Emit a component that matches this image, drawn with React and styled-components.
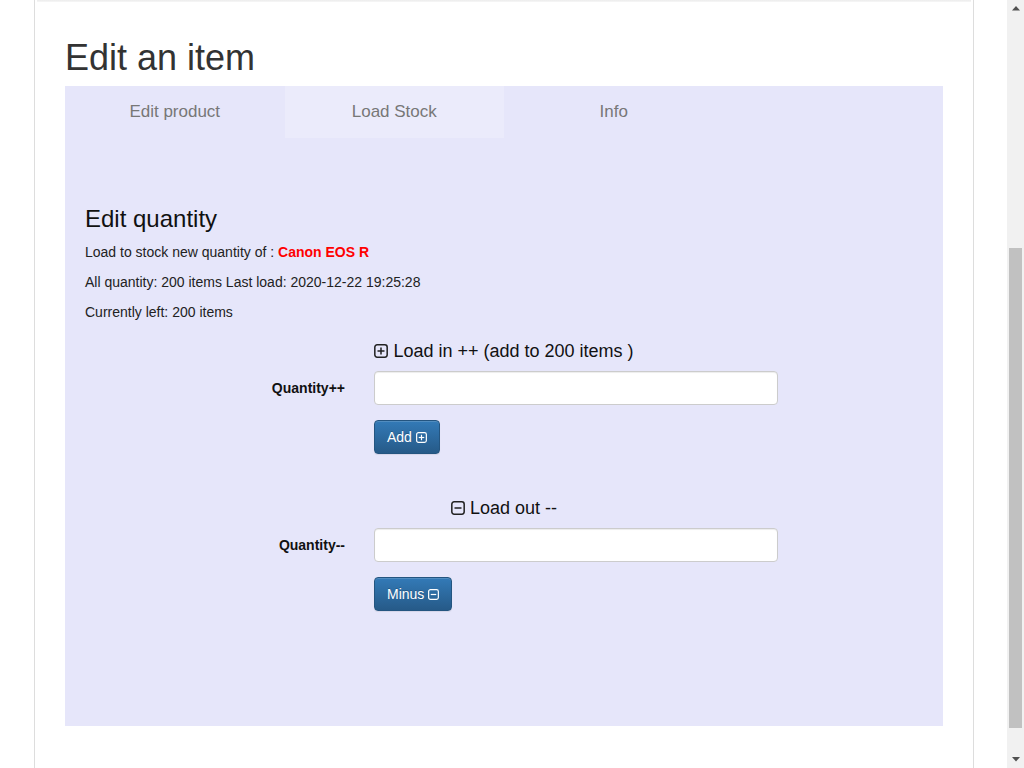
import React from "react";
import styled, { createGlobalStyle } from "styled-components";

const Global = createGlobalStyle`
  html, body {
    margin: 0;
    padding: 0;
    overflow: hidden;
    background: #fff;
    font-family: "Liberation Sans", Arial, Helvetica, sans-serif;
  }
  * { box-sizing: border-box; }
`;

const Root = styled.div`
  display: flex;
  height: 768px;
  overflow: hidden;
`;

const Main = styled.div`
  flex: 1;
  min-width: 0;
  height: 100%;
`;

const Container = styled.div`
  margin-left: 34px;
  width: 940px;
  height: 100%;
  border-left: 1px solid #ddd;
  border-right: 1px solid #ddd;
  padding: 0 30px;
`;

const TopShade = styled.div`
  height: 2px;
  margin: 0 -28px 0 -28px;
  background: linear-gradient(to bottom, #ececec, #f7f7f7);
`;

const Title = styled.h1`
  margin: 36px 0 8px;
  font-size: 36px;
  line-height: 40px;
  font-weight: 400;
  color: #333;
`;

const Panel = styled.div`
  background: #e6e6fa;
  padding-bottom: 115px;
`;

const TabBar = styled.div`
  display: grid;
  grid-template-columns: repeat(4, 1fr);
  height: 52px;
`;

const Tab = styled.div`
  height: 52px;
  line-height: 52px;
  text-align: center;
  font-size: 17px;
  color: #777;
  background: ${(p) => (p.$active ? "#ebebfb" : "transparent")};
`;

const Content = styled.div`
  display: flex;
  flex-direction: column;
  padding: 0 20px;
`;

const SectionTitle = styled.h3`
  margin: 68px 0 10px;
  font-size: 24px;
  line-height: 26px;
  font-weight: 400;
  color: #111;
`;

const Info = styled.p`
  margin: 0 0 10px;
  font-size: 14px;
  line-height: 20px;
  color: #222;
`;

const Product = styled.span`
  color: #f00;
  font-weight: 700;
`;

const Group = styled.div`
  padding-top: ${(p) => p.$top}px;
`;

const GroupHeading = styled.div`
  margin: 0 0 10px;
  text-align: center;
  font-size: 18px;
  line-height: 20px;
  color: #111;
  svg {
    vertical-align: -1px;
    margin-right: 5px;
  }
`;

const FormGrid = styled.div`
  display: grid;
  grid-template-columns: 260px 404px;
  column-gap: 29px;
  row-gap: 15px;
  align-items: center;
`;

const Label = styled.label`
  text-align: right;
  font-size: 14px;
  font-weight: 700;
  color: #111;
`;

const Input = styled.input`
  width: 404px;
  height: 34px;
  border: 1px solid #ccc;
  border-radius: 4px;
  background: #fff;
  box-shadow: inset 0 1px 1px rgba(0, 0, 0, 0.075);
  font-size: 14px;
  padding: 6px 12px;
  outline: none;
`;

const Button = styled.button`
  grid-column: 2;
  justify-self: start;
  height: 34px;
  padding: 0 12px;
  border: 1px solid #245580;
  border-radius: 4px;
  background-image: linear-gradient(to bottom, #337ab7 0, #265a88 100%);
  color: #fff;
  font-family: "Liberation Sans", Arial, sans-serif;
  font-size: 14px;
  text-shadow: 0 -1px 0 rgba(0, 0, 0, 0.2);
  box-shadow: inset 0 1px 0 rgba(255, 255, 255, 0.15), 0 1px 1px rgba(0, 0, 0, 0.075);
  display: inline-flex;
  align-items: center;
  gap: 4px;
  cursor: pointer;
`;

const Scrollbar = styled.div`
  width: 17px;
  height: 100%;
  background: #f1f1f1;
  display: flex;
  flex-direction: column;
`;

const ArrowBox = styled.div`
  height: 17px;
  display: flex;
  align-items: center;
  justify-content: center;
`;

const Track = styled.div`
  flex: 1;
  padding-top: 231px;
`;

const Thumb = styled.div`
  width: 13px;
  height: 480px;
  margin-left: 2px;
  background: #c1c1c1;
`;

const SquareIcon = ({ plus, size = 13, color = "#222", sw = 1.2 }) => (
  <svg width={size} height={size} viewBox="0 0 12 12" fill="none">
    <rect x="0.7" y="0.7" width="10.6" height="10.6" rx="2" stroke={color} strokeWidth={sw} />
    <line x1="3" y1="6" x2="9" y2="6" stroke={color} strokeWidth={sw} />
    {plus && <line x1="6" y1="3" x2="6" y2="9" stroke={color} strokeWidth={sw} />}
  </svg>
);

const Arrow = ({ down }) => (
  <svg width="8" height="5" viewBox="0 0 8 5">
    {down ? <path d="M0 0 L8 0 L4 4.5 Z" fill="#505050" /> : <path d="M0 4.5 L8 4.5 L4 0 Z" fill="#505050" />}
  </svg>
);

export default function App() {
  return (
    <>
      <Global />
      <Root>
        <Main>
          <Container>
            <TopShade />
            <Title>Edit an item</Title>
            <Panel>
              <TabBar>
                <Tab>Edit product</Tab>
                <Tab $active>Load Stock</Tab>
                <Tab>Info</Tab>
                <Tab />
              </TabBar>
              <Content>
                <SectionTitle>Edit quantity</SectionTitle>
                <Info>
                  Load to stock new quantity of : <Product>Canon EOS R</Product>
                </Info>
                <Info>All quantity: 200 items Last load: 2020-12-22 19:25:28</Info>
                <Info>Currently left: 200 items</Info>

                <Group $top={9}>
                  <GroupHeading>
                    <SquareIcon plus size={14} sw={1.3} />
                    Load in ++ (add to 200 items )
                  </GroupHeading>
                  <FormGrid>
                    <Label>Quantity++</Label>
                    <Input type="text" />
                    <Button>
                      Add <SquareIcon plus size={11} color="#fff" sw={1.3} />
                    </Button>
                  </FormGrid>
                </Group>

                <Group $top={44}>
                  <GroupHeading>
                    <SquareIcon size={14} sw={1.3} />
                    Load out --
                  </GroupHeading>
                  <FormGrid>
                    <Label>Quantity--</Label>
                    <Input type="text" />
                    <Button>
                      Minus <SquareIcon size={11} color="#fff" sw={1.3} />
                    </Button>
                  </FormGrid>
                </Group>
              </Content>
            </Panel>
          </Container>
        </Main>
        <Scrollbar>
          <ArrowBox>
            <Arrow />
          </ArrowBox>
          <Track>
            <Thumb />
          </Track>
          <ArrowBox>
            <Arrow down />
          </ArrowBox>
        </Scrollbar>
      </Root>
    </>
  );
}
